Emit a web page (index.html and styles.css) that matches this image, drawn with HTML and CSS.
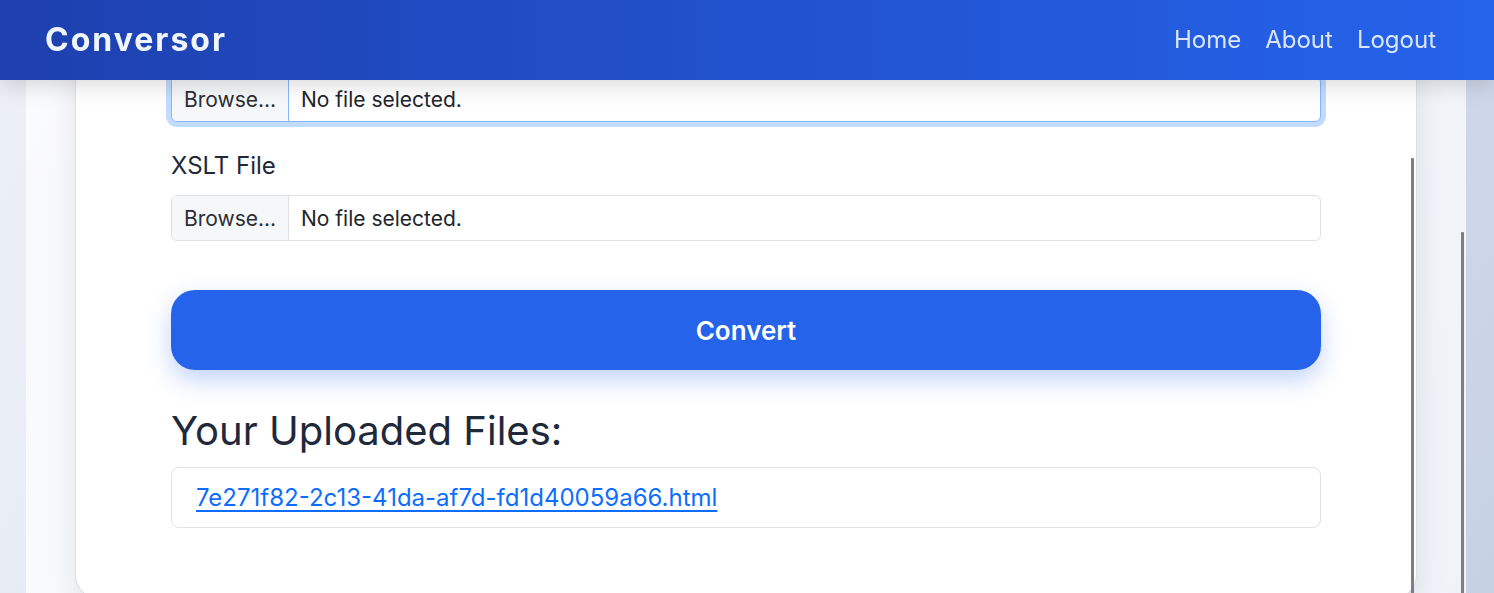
FILE: index.html
```html
<!DOCTYPE html>
<html lang="en">
<head>
<meta charset="utf-8">
<title>Conversor</title>
<link rel="stylesheet" href="styles.css">
</head>
<body>
<nav class="navbar">
  <a class="brand" href="#">Conversor</a>
  <ul class="nav-links">
    <li><a href="#">Home</a></li>
    <li><a href="#">About</a></li>
    <li><a href="#">Logout</a></li>
  </ul>
</nav>
<div class="page">
  <div class="container">
    <div class="card">
      <div class="file-input focused">
        <span class="browse">Browse...</span>
        <span class="fname">No file selected.</span>
      </div>
      <label class="form-label">XSLT File</label>
      <div class="file-input">
        <span class="browse">Browse...</span>
        <span class="fname">No file selected.</span>
      </div>
      <button class="btn-convert">Convert</button>
      <h3 class="uploads-title">Your Uploaded Files:</h3>
      <ul class="list-group">
        <li class="list-item"><a href="#">7e271f82-2c13-41da-af7d-fd1d40059a66.html</a></li>
      </ul>
      <div class="scroll-thumb card-thumb"></div>
    </div>
    <div class="scroll-thumb page-thumb"></div>
  </div>
</div>
</body>
</html>
```

FILE: styles.css
```css
* { box-sizing: border-box; }

html, body {
  margin: 0;
  height: 593px;
  overflow: hidden;
}

body {
  font-family: Inter, "Noto Sans", "Liberation Sans", sans-serif;
  background: linear-gradient(120deg, #edf0f7 0%, #dfe5ef 50%, #c6d1e4 100%);
  color: #212529;
}

.navbar {
  position: fixed;
  top: 0;
  left: 0;
  right: 0;
  height: 80px;
  z-index: 10;
  display: flex;
  align-items: center;
  justify-content: space-between;
  padding: 0 58px 0 45px;
  background: linear-gradient(90deg, #1e40af 0%, #2563eb 100%);
  box-shadow: 0 4px 22px rgba(0, 0, 0, 0.16);
}

.brand {
  color: #eff6ff;
  text-decoration: none;
  font-weight: 700;
  font-size: 32px;
  letter-spacing: 2px;
  margin-top: -2px;
}

.nav-links {
  list-style: none;
  margin: -2px 0 0;
  padding: 0;
  display: flex;
  gap: 24px;
}

.nav-links a {
  color: #dbe6fd;
  text-decoration: none;
  font-size: 24px;
}

.page {
  height: 593px;
  overflow: hidden;
}

.container {
  position: relative;
  width: 1440px;
  height: 593px;
  margin: 0 0 0 26px;
  padding: 0 49px;
  background: rgba(255, 255, 255, 0.72);
  overflow: hidden;
}

.card {
  position: relative;
  background: #fff;
  border: 1px solid #dcdfe4;
  border-top: none;
  border-radius: 0 0 24px 24px;
  padding: 76px 95px 70px;
  box-shadow: 0 10px 30px rgba(30, 41, 59, 0.10);
}

.file-input {
  display: flex;
  height: 46px;
  border: 1px solid #dee2e6;
  border-radius: 6px;
  font-size: 21px;
  color: #212529;
  overflow: hidden;
  background: #fff;
}

.file-input.focused {
  border-color: #86b7fe;
  box-shadow: 0 0 0 5px #c2dbfe;
  overflow: visible;
}

.browse {
  display: flex;
  align-items: center;
  width: 117px;
  padding-left: 12px;
  background: #f6f7f9;
  border-right: 1px solid #dee2e6;
  color: #2b2f33;
}

.file-input.focused .browse {
  border-right-color: #86b7fe;
  border-radius: 5px 0 0 5px;
}

.fname {
  display: flex;
  align-items: center;
  padding-left: 12px;
}

.form-label {
  display: block;
  margin: 27px 0 13px;
  font-size: 24px;
  line-height: 33px;
  color: #1f2937;
}

.btn-convert {
  display: block;
  width: 100%;
  height: 80px;
  margin-top: 49px;
  border: none;
  border-radius: 24px;
  background: #2563eb;
  color: #fff;
  font-family: inherit;
  font-size: 26px;
  font-weight: 600;
  box-shadow: 0 10px 24px rgba(37, 99, 235, 0.28);
}

.uploads-title {
  margin: 36px 0 11px;
  font-size: 40px;
  line-height: 50px;
  font-weight: 400;
  color: #1e293b;
}

.list-group {
  list-style: none;
  margin: 0;
  padding: 0;
}

.list-item {
  height: 61px;
  display: flex;
  align-items: center;
  padding: 0 24px;
  border: 1px solid #dfe2e6;
  border-radius: 8px;
  font-size: 24px;
}

.list-item a {
  color: #0d6efd;
  text-decoration: underline;
  text-underline-offset: 4px;
}

.scroll-thumb {
  position: absolute;
  width: 3px;
  background: #7f7f7f;
  border-radius: 1px;
}

.card-thumb {
  right: 2px;
  top: 158px;
  height: 500px;
}

.page-thumb {
  right: 2px;
  top: 232px;
  height: 400px;
}
```
